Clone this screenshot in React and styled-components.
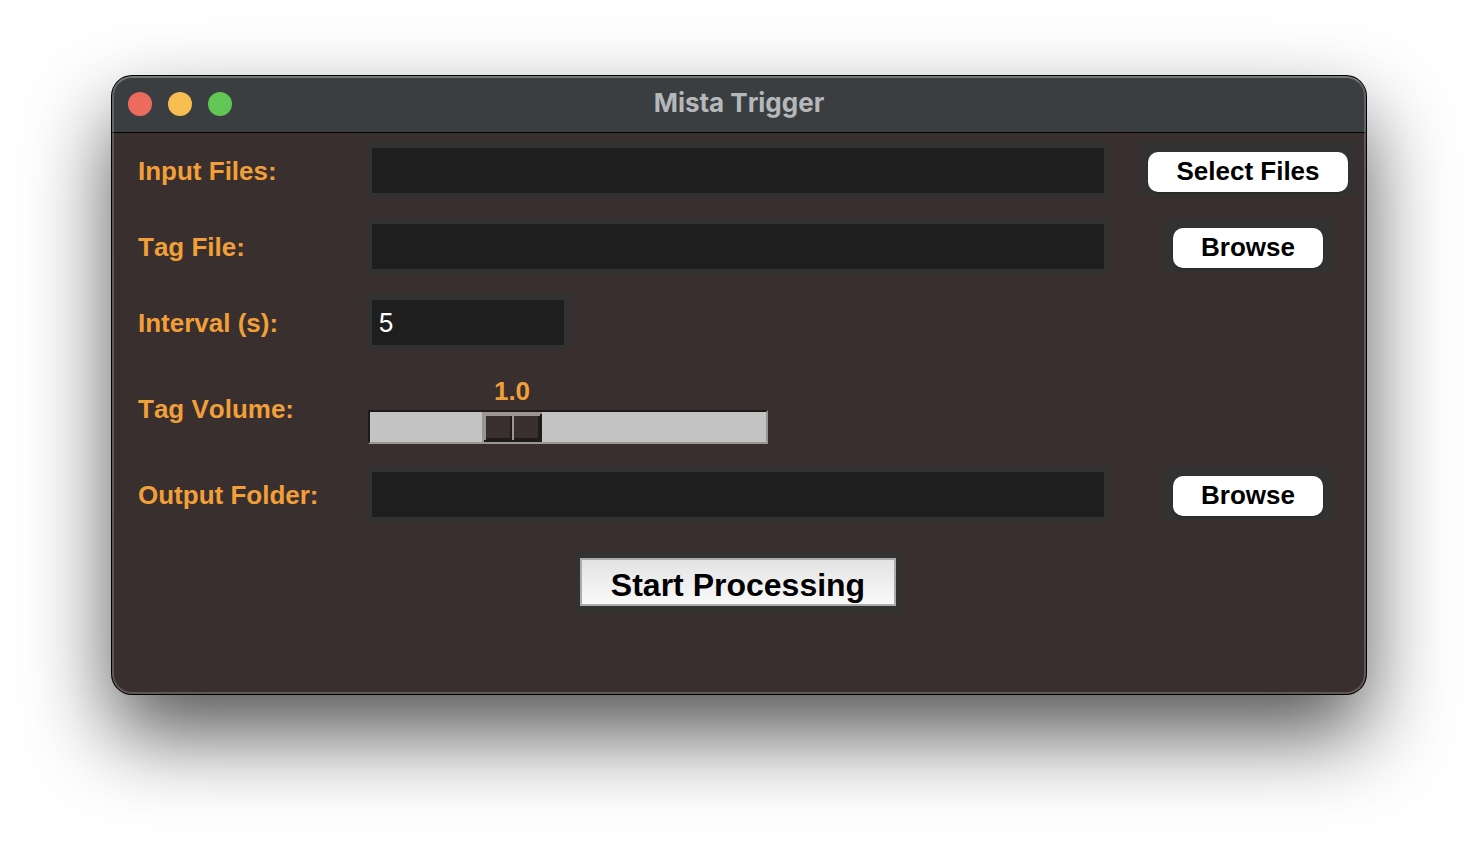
import React, { useState } from "react";
import styled, { createGlobalStyle } from "styled-components";

const GlobalStyle = createGlobalStyle`
  *, *::before, *::after { box-sizing: border-box; }
  body {
    margin: 0;
    background: #ffffff;
    font-family: "Liberation Sans", Arial, sans-serif;
  }
`;

const Page = styled.div`
  min-height: 100vh;
  padding: 76px 112px;
`;

const Window = styled.main`
  position: relative;
  border-radius: 20px;
  overflow: hidden;
  background: #382f2e;
  box-shadow: 0 0 0 1px #000000, 0 40px 84px rgba(0, 0, 0, 0.67);

  &::after {
    content: "";
    position: absolute;
    inset: 0;
    border-radius: 20px;
    border: 2px solid rgba(255, 255, 255, 0.2);
    border-top-color: rgba(255, 255, 255, 0.3);
    pointer-events: none;
  }
`;

const TitleBar = styled.header`
  display: grid;
  grid-template-columns: 1fr auto 1fr;
  align-items: center;
  height: 57px;
  padding: 0 16px;
  background: #3a3e40;
  border-bottom: 1px solid #000000;
`;

const Title = styled.h1`
  margin: 0;
  padding-bottom: 2px;
  font: 700 26px/32px Inter, sans-serif;
  font-kerning: none;
  color: #b5b8ba;
`;

const Lights = styled.div`
  display: flex;
  gap: 16px;
`;

const Light = styled.button`
  width: 24px;
  height: 24px;
  padding: 0;
  border: 0;
  border-radius: 50%;
  background: ${(p) => p.$color};
`;

const Form = styled.form`
  padding: 9px 10px 82px 26px;
`;

const Fields = styled.div`
  display: grid;
  grid-template-columns: 228px minmax(0, 1fr) 216px;
  row-gap: 20px;
`;

const Label = styled.label`
  align-self: center;
  padding-top: 2px;
  font-size: 26px;
  font-weight: 700;
  line-height: 30px;
  font-kerning: none;
  color: #f19f38;
`;

const Cell = styled.div`
  margin-right: 30px;
`;

const TextInput = styled.input`
  display: block;
  width: ${(p) => (p.$short ? "204px" : "100%")};
  height: 56px;
  padding: 0 6px;
  border: 6px solid #323232;
  border-bottom-width: 5px;
  border-radius: 0;
  outline: 0;
  background: #1e1e1e;
  color: #ffffff;
  font: 400 26px/32px Inter, sans-serif;
`;

const ButtonFrame = styled.div`
  justify-self: center;
  align-self: start;
  padding: 10px 8px 4px;
  background: #323232;
`;

const PushButton = styled.button`
  display: block;
  height: 40px;
  padding: 0 28px 2px;
  border: 0;
  border-radius: 10px;
  background: #ffffff;
  color: #000000;
  font: 700 26px/38px "Liberation Sans", Arial, sans-serif;
  white-space: nowrap;
  box-shadow: 0 1px 2px rgba(0, 0, 0, 0.3);
`;

const Scale = styled.div`
  width: 404px;
  height: 76px;
  padding: 6px 2px 2px;
`;

const ScaleValue = styled.output`
  display: block;
  width: 60px;
  height: 34px;
  text-align: center;
  font-size: 26px;
  font-weight: 700;
  line-height: 30px;
  color: #f19f38;
`;

const Slider = styled.input`
  appearance: none;
  display: block;
  width: 400px;
  height: 34px;
  margin: 0;
  border: 2px solid;
  border-color: #1f1b1a #9a9694 #9a9694 #1f1b1a;
  background: #c3c3c3;
  outline: 0;

  &::-webkit-slider-thumb {
    appearance: none;
    width: 60px;
    height: 30px;
    border: 0;
    border-radius: 0;
    background:
      linear-gradient(#9a9694, #9a9694) 0 0 / 58px 4px no-repeat,
      linear-gradient(#9a9694, #9a9694) 0 0 / 2px 30px no-repeat,
      linear-gradient(#9a9694, #9a9694) 0 0 / 4px 28px no-repeat,
      linear-gradient(#9a9694, #9a9694) 30px 4px / 2px 24px no-repeat,
      linear-gradient(#9a9694, #9a9694) 0 0 / 60px 2px no-repeat,
      linear-gradient(#1f1b1a, #1f1b1a) 28px 4px / 2px 24px no-repeat,
      linear-gradient(#1f1b1a, #1f1b1a) 56px 2px / 4px 28px no-repeat,
      linear-gradient(#1f1b1a, #1f1b1a) 2px 26px / 58px 4px no-repeat,
      #382f2e;
  }
`;

const Actions = styled.div`
  display: flex;
  justify-content: center;
  margin: 30px 16px 0 0;
`;

const StartFrame = styled.div`
  margin-right: 2px;
  padding: 6px;
  background: #323232;
`;

const StartButton = styled.button`
  display: block;
  height: 48px;
  padding: 6px 29px 0;
  border: 2px solid #acacac;
  border-radius: 0;
  background: linear-gradient(#e3e3e3, #f9f9f9);
  color: #000000;
  font: 700 32px/36px "Liberation Sans", Arial, sans-serif;
  white-space: nowrap;
`;

const SCALE_MAX = 3;
const SCALE_TRAVEL = 336;

function FileRow({ id, label, action }) {
  return (
    <>
      <Label htmlFor={id}>{label}</Label>
      <Cell>
        <TextInput id={id} type="text" />
      </Cell>
      <ButtonFrame>
        <PushButton type="button">{action}</PushButton>
      </ButtonFrame>
    </>
  );
}

const WideCell = styled(Cell)`
  grid-column: span 2;
`;

export default function App() {
  const [volume, setVolume] = useState(1);
  const [interval, setInterval] = useState("5");

  return (
    <Page>
      <GlobalStyle />
      <Window>
        <TitleBar>
          <Lights>
            <Light type="button" aria-label="Close" $color="#ed6a5f" />
            <Light type="button" aria-label="Minimize" $color="#f6be50" />
            <Light type="button" aria-label="Zoom" $color="#62c655" />
          </Lights>
          <Title>Mista Trigger</Title>
        </TitleBar>
        <Form onSubmit={(e) => e.preventDefault()}>
          <Fields>
            <FileRow id="input-files" label="Input Files:" action="Select Files" />
            <FileRow id="tag-file" label="Tag File:" action="Browse" />
            <Label htmlFor="interval">Interval (s):</Label>
            <WideCell>
              <TextInput
                id="interval"
                type="text"
                $short
                value={interval}
                onChange={(e) => setInterval(e.target.value)}
              />
            </WideCell>
            <Label htmlFor="volume">Tag Volume:</Label>
            <WideCell>
              <Scale>
                <ScaleValue
                  htmlFor="volume"
                  style={{ marginLeft: 2 + Math.round((volume / SCALE_MAX) * SCALE_TRAVEL) }}
                >
                  {volume.toFixed(1)}
                </ScaleValue>
                <Slider
                  id="volume"
                  type="range"
                  min="0"
                  max={SCALE_MAX}
                  step="0.1"
                  value={volume}
                  onChange={(e) => setVolume(Number(e.target.value))}
                />
              </Scale>
            </WideCell>
            <FileRow id="output-folder" label="Output Folder:" action="Browse" />
          </Fields>
          <Actions>
            <StartFrame>
              <StartButton type="submit">Start Processing</StartButton>
            </StartFrame>
          </Actions>
        </Form>
      </Window>
    </Page>
  );
}
